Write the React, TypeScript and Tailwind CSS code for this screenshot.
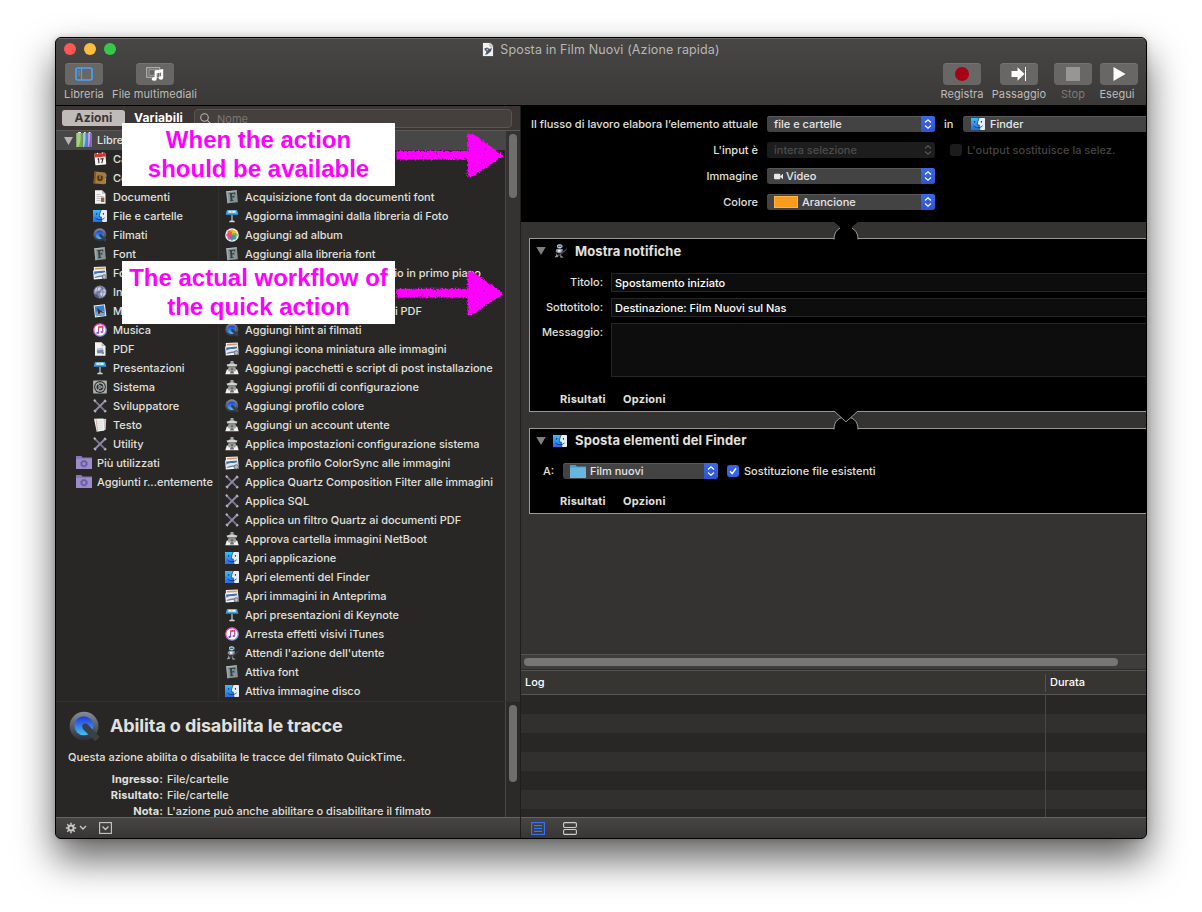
import React from "react";

type IconName =
  | "calendar" | "contacts" | "doc" | "finder" | "quicktime" | "font" | "preview"
  | "globe" | "mail" | "music" | "pdf" | "keynote" | "system" | "tools" | "text"
  | "folder" | "books" | "photos" | "installer" | "automator";

const drawings: Record<IconName, React.ReactNode> = {
  calendar: (
    <g transform="rotate(-5 7 7)">
      <rect x="1.800" y="1.200" width="11" height="11.800" rx="1" fill="#f7f7f7" />
      <path d="M1.800 2.200a1 1 0 011-1h9a1 1 0 011 1V5h-11z" fill="#d9332f" />
      <path d="M5 .5v1.600M9.800 .5v1.600" stroke="#eee" strokeWidth="1" />
      <path d="M4.600 7.100l1-.5v4.700M7.300 7H10l-1.600 4.300" stroke="#2d2d2d" strokeWidth="1.100" fill="none" />
    </g>
  ),
  contacts: (
    <g transform="rotate(5 7 7)">
      <path d="M11.800 2.500l1.400.2v3h-1.400z" fill="#5fa0d8" />
      <path d="M11.800 6.200l1.400.2v3h-1.400z" fill="#79b84c" />
      <path d="M11.800 9.600l1.400.2v2.400h-1.400z" fill="#d9a94a" />
      <rect x="1" y="1" width="11.300" height="12" rx="1" fill="#a87b3f" />
      <rect x="1" y="1" width="1.700" height="12" fill="#7c5726" />
      <circle cx="7" cy="7" r="3.300" fill="#8d632e" />
      <path d="M5.200 4.800v2.700a1.800 1.800 0 003.600 0V4.800" stroke="#4b3012" strokeWidth="1.400" fill="none" />
    </g>
  ),
  doc: (
    <g>
      <path d="M2 .3h7l3.500 3.500v9.900H2z" fill="#f3f3f3" />
      <path d="M9 .3l3.500 3.500H9z" fill="#bdbdbd" />
      <path d="M3.500 4.500h4M3.500 6.500h7M3.500 8.500h4M3.500 10.500h4" stroke="#b0b0b0" strokeWidth=".8" />
      <rect x="8" y="7.500" width="3.300" height="4.500" fill="#8a6242" />
    </g>
  ),
  finder: (
    <g>
      <rect x="0" y="1" width="14" height="12" rx=".8" fill="#e7edf6" />
      <path d="M0 1.800A.8.8 0 01.8 1h7.400C7 3.500 6.400 5.700 6.400 7.900h1.900c0 2 .2 3.600.7 5.100H.8a.8.8 0 01-.8-.8z" fill="url(#finderBlue)" />
      <path d="M8.200 1C7 3.500 6.400 5.700 6.400 7.900h1.900c0 2 .2 3.600.7 5.100" stroke="#15375f" strokeWidth=".7" fill="none" />
      <path d="M3.700 4v1.700M10.400 4v1.700" stroke="#14304f" strokeWidth="1" />
      <path d="M2.500 8.900c2.500 2.400 6.400 2.400 9 0" stroke="#14304f" strokeWidth=".9" fill="none" />
    </g>
  ),
  quicktime: (
    <g>
      <circle cx="6.800" cy="6.800" r="6.500" fill="url(#qtRing)" />
      <circle cx="6.700" cy="6.700" r="4.300" fill="url(#qtBlue)" />
      <path d="M6.900 5.700c.9-.1 1.400.2 2 .8l5 5.200-2 2-5.300-5.200c-.8-.8-.8-2.500.3-2.800z" fill="#3b4046" />
    </g>
  ),
  font: (
    <g transform="rotate(-5 7 7)">
      <rect x="1.800" y=".8" width="10.600" height="12" rx=".6" fill="#869498" />
      <rect x="1.800" y=".8" width="10.600" height="1" fill="#b4c0c2" />
      <rect x="1.800" y=".8" width="1.500" height="12" fill="#9eabad" />
      <path d="M4.300 2.900h6.200v2.200h-.7c-.1-.9-.5-1.200-1.300-1.200H7.300v2.500h.8c.4 0 .6-.2.700-.7h.6v2.300h-.6c-.1-.5-.3-.7-.7-.7h-.8v2.500c0 .5.200.6.900.7v.6H4.600v-.6c.5-.1.7-.2.700-.7V4.500c0-.6-.2-.8-1-.9z" fill="#343f43" />
    </g>
  ),
  preview: (
    <g>
      <g transform="rotate(-2 7 7)">
        <rect x="1" y=".8" width="12" height="8.500" fill="#f3f1ec" />
        <rect x="2" y="1.700" width="10" height="1.600" fill="#c39c68" />
      </g>
      <g transform="rotate(-5 7 7)">
        <rect x=".3" y="4" width="13" height="9" fill="#f7f7f7" />
        <rect x="1.300" y="5" width="11" height="3.500" fill="#3f6fba" />
        <path d="M1.300 8c4-2.400 8 .2 11-1.500v2.200c-4 2.200-8 .3-11 1.800z" fill="#dfe7f0" />
        <path d="M1.300 10.400c4-1.400 7.500-.5 11-1.200v1.200l-11 1.200z" fill="#6b7f9c" />
      </g>
      <circle cx="11.300" cy="10.900" r="2.200" fill="#b3bac4" stroke="#4e4e4e" strokeWidth=".7" />
    </g>
  ),
  globe: (
    <g>
      <circle cx="7" cy="7" r="6.500" fill="#8289ad" />
      <path d="M3 3l3-1 2 1-1 2-2 1-2 2-1.500-1zM8 6l3-2 2 2-1 4-3 2-2-3z" fill="#cbd0e2" />
      <path d="M1 9l3 .5L6 12l-1 1C3 12.500 1.500 11 1 9z" fill="#505980" />
      <ellipse cx="7" cy="7" rx="3" ry="6.400" fill="none" stroke="#4c5478" strokeWidth=".5" />
      <path d="M.6 7h12.800" stroke="#4c5478" strokeWidth=".5" />
    </g>
  ),
  mail: (
    <g transform="rotate(-7 7 7)">
      <rect x="1.300" y=".8" width="11.400" height="12" fill="#eceff3" />
      <rect x="2.300" y="1.800" width="9.400" height="10" fill="#3c7ecb" />
      <path d="M2.300 8.500l3-2 6.400 1v4.300H2.300z" fill="#6da2dd" />
      <path d="M4.500 3.500L7 6l4 3.500-3.500-.3L5 10z" fill="#2b3340" />
      <path d="M7 8l4 1.800-4 .9z" fill="#c79c58" />
    </g>
  ),
  music: (
    <g>
      <circle cx="7" cy="7" r="6.200" fill="#fff" stroke="url(#tunesRing)" strokeWidth="1.300" />
      <path d="M5.600 9.700V4.100l4.100-.9v5.600" stroke="url(#tunesNote)" strokeWidth="1.200" fill="none" />
      <path d="M5.600 3.900l4.100-.9v1.500l-4.100.9z" fill="#ef4a73" />
      <ellipse cx="4.700" cy="9.900" rx="1.400" ry="1.100" fill="#5b62e6" />
      <ellipse cx="8.800" cy="9" rx="1.400" ry="1.100" fill="#9b55dd" />
    </g>
  ),
  pdf: (
    <g>
      <path d="M2 .3h6.500l4 4v9.400H2z" fill="#f3f3f3" />
      <path d="M8.500.3l4 4h-4z" fill="#bdbdbd" />
      <path d="M3.800 6.400l6-.8.7 3.400-6.200.8z" fill="#b4c1d3" />
      <path d="M3.800 8.600l6.400-.9.5 3.300-6.400.6z" fill="#7186a6" />
      <circle cx="9.800" cy="11" r="1.300" fill="#8a8a8a" />
    </g>
  ),
  keynote: (
    <g>
      <path d="M2 .9h10l1.200 4.200H.8z" fill="#45a5e4" />
      <path d="M3.600 1.800h6.800l.5 2H3.100z" fill="#f8fafb" />
      <path d="M5.600 2.300h2.200v1.100H5.600z" fill="#d9c04a" />
      <path d="M.8 4.900h12.400v1H.8z" fill="#2583cb" />
      <path d="M6.400 5.900h1.200v6H6.400z" fill="#c0c9cf" />
      <path d="M4.300 12.500c0-.8 1.300-1 2.700-1s2.700.2 2.700 1v.7H4.300z" fill="#cdd5da" />
    </g>
  ),
  system: (
    <g>
      <rect x=".1" y=".4" width="13.800" height="13.200" rx=".8" fill="#a9aeb0" />
      <circle cx="7" cy="7" r="5.900" fill="#2a2c2e" />
      <circle cx="7" cy="7" r="4.200" fill="none" stroke="#b4b8bb" strokeWidth="1.200" />
      <circle cx="7" cy="7" r="1.700" fill="#b4b8bb" />
      <path d="M7 7L4.900 3.400M7 7h4.200M7 7l-2.100 3.600" stroke="#b4b8bb" strokeWidth=".8" />
      <circle cx="7" cy="7" r=".8" fill="#2a2c2e" />
    </g>
  ),
  tools: (
    <g>
      <path d="M2 2l10 10" stroke="#77728c" strokeWidth="1.800" />
      <path d="M12 2L2 12" stroke="#928da8" strokeWidth="1.800" />
      <path d="M1 .7l1.500 1.800M11.300 13l1.900-1.500" stroke="#b5b0c8" strokeWidth="2" />
      <path d="M11.300 1l1.800 1.900M1 11.200l1.900 1.900" stroke="#b5b0c8" strokeWidth="1.900" />
    </g>
  ),
  text: (
    <g>
      <path d="M5 1.500l8.200-.7-.5 11-5.700 1.200z" fill="#c9c9c9" />
      <path d="M1 .8l9.500-.3.900 12-7.700 1.200z" fill="#f4f4f2" />
      <path d="M3 3.300l6.500-.3M3.200 5.300l6.500-.3M3.400 7.300l6.500-.3M3.600 9.300l6.500-.3M3.800 11.200l6-.3" stroke="#c4c4c4" strokeWidth=".6" />
      <path d="M3 .8l1.600 12.600" stroke="#d59a96" strokeWidth=".7" />
    </g>
  ),
  folder: (
    <g>
      <path d="M0 1h5.300l1.400 1.600H16V14H0z" fill="#8577b8" />
      <path d="M0 3.800h16V14H0z" fill="#9a8dca" />
      <circle cx="8" cy="8.700" r="2.400" fill="none" stroke="#6b5ca5" strokeWidth="1.500" />
      <circle cx="8" cy="8.700" r="3.500" fill="none" stroke="#6b5ca5" strokeWidth="1" strokeDasharray="1.400 1.350" />
    </g>
  ),
  books: (
    <g>
      <path d="M.3 1h6v14h-6z" fill="#a5cf79" />
      <path d="M4.600 1h1.700v14H2.500C4.300 11 5 6.500 4.600 1z" fill="#6ead41" />
      <path d="M6.800 1H11v14H6.800z" fill="#9bc6ec" />
      <path d="M9.400 1H11v14H8c1.400-4 1.800-8 1.400-14z" fill="#4c87c7" />
      <path d="M11.500 1h4.300v14h-4.300z" fill="#c29be4" />
      <path d="M14.200 1h1.600v14h-3.300c1.400-4 2-8 1.700-14z" fill="#8a5fba" />
      <path d="M2 0h3v1H2zM8 0h1.800v1H8zM12.700 0h1.800v1h-1.800z" fill="#e8e8e8" />
    </g>
  ),
  photos: (
    <g>
      <circle cx="7" cy="7" r="6.800" fill="#f7f7f7" />
      {["#f7a21b", "#d8c826", "#6cb644", "#35a08f", "#4a83c9", "#8e62b4", "#dd4a7e", "#ef5634"].map((c, i) => (
        <ellipse key={c} cx="7" cy="4" rx="1.900" ry="2.800" fill={c} fillOpacity=".92" transform={`rotate(${i * 45} 7 7)`} />
      ))}
    </g>
  ),
  installer: (
    <g>
      <path d="M.3 13.300l1.500-4.800h10.400l1.500 4.800z" fill="#f2f2ef" />
      <path d="M2.800 9l1-4h6.400l1 4-1 1.500H3.800z" fill="#9da09c" />
      <path d="M1.600 3.600L7 2.400l5.400 1.200-.8 2H2.400z" fill="#d3d5d1" />
      <path d="M5.500 0h3v2l1.600 1H3.900l1.600-1z" fill="#a4a7a4" />
      <path d="M3 5.400h8v.9H3z" fill="#5d5f5d" />
      <path d="M5.800 7.300h2.400V9H5.800z" fill="#60635f" />
      <path d="M5.300 11L7 9.600 8.700 11l.3 1.500H5z" fill="#6b6d6a" />
    </g>
  ),
  automator: (
    <g>
      <path d="M4 1.300C5.500-.2 8 .1 9.300 1.300l.2 2-2.500 1-3-.9z" fill="#cfd6df" />
      <path d="M4.700 1.600h3.800v1.500H4.700z" fill="#28709a" />
      <path d="M3.500 5l3.500-.8 3 1.300-.7 3.400-4.300.3L2.500 7.500z" fill="#8f95a2" />
      <path d="M5 5.700l2.700.2-.5 1.900-2.200-.1z" fill="#f0f2f5" />
      <path d="M3 12.200l5-3.500L14 3.900l-.3 2-5.400 4.600-4 2.900z" fill="#3c3f57" />
      <path d="M3.700 9l1.300 3.600-2.800.9-.4-.8 1.200-.7zM7.500 9.700l1 2.500 2 .7-.3.700H7.300z" fill="#a8adb8" />
    </g>
  ),
};

function Icon({ name, size = 14, className = "" }: { name: IconName; size?: number; className?: string }) {
  const box = name === "folder" || name === "books" ? 16 : 14;
  return (
    <svg width={size} height={size} viewBox={`0 0 ${box} ${box}`} className={`shrink-0 ${className}`}>
      {drawings[name]}
    </svg>
  );
}

function SharedGradients() {
  return (
    <svg width="0" height="0" className="absolute">
      <defs>
        <linearGradient id="finderBlue" x1="0" y1="0" x2="0" y2="1">
          <stop offset="0" stopColor="#35c0fb" />
          <stop offset="1" stopColor="#2a67ee" />
        </linearGradient>
        <linearGradient id="qtRing" x1="0" y1="0" x2="0" y2="1">
          <stop offset="0" stopColor="#848d9c" />
          <stop offset="1" stopColor="#2c2f34" />
        </linearGradient>
        <linearGradient id="qtBlue" x1="0" y1="0" x2="0" y2="1">
          <stop offset="0" stopColor="#2437d8" />
          <stop offset="1" stopColor="#42c2fb" />
        </linearGradient>
        <linearGradient id="tunesRing" x1="0" y1="0" x2="1" y2="1">
          <stop offset="0" stopColor="#fb5163" />
          <stop offset=".5" stopColor="#c25ce6" />
          <stop offset="1" stopColor="#4fb4f5" />
        </linearGradient>
        <linearGradient id="tunesNote" x1="0" y1="0" x2="0" y2="1">
          <stop offset="0" stopColor="#f0436e" />
          <stop offset="1" stopColor="#5b62e6" />
        </linearGradient>
      </defs>
    </svg>
  );
}

const categories: [IconName, string][] = [
  ["calendar", "Ca"],
  ["contacts", "Co"],
  ["doc", "Documenti"],
  ["finder", "File e cartelle"],
  ["quicktime", "Filmati"],
  ["font", "Font"],
  ["preview", "Fo"],
  ["globe", "In"],
  ["mail", "M"],
  ["music", "Musica"],
  ["pdf", "PDF"],
  ["keynote", "Presentazioni"],
  ["system", "Sistema"],
  ["tools", "Sviluppatore"],
  ["text", "Testo"],
  ["tools", "Utility"],
];

const actionsTop: [IconName, string][] = [
  ["font", "Acquisizione font da documenti font"],
  ["keynote", "Aggiorna immagini dalla libreria di Foto"],
  ["photos", "Aggiungi ad album"],
  ["font", "Aggiungi alla libreria font"],
];

const actionsBottom: [IconName, string][] = [
  ["quicktime", "Aggiungi hint ai filmati"],
  ["preview", "Aggiungi icona miniatura alle immagini"],
  ["installer", "Aggiungi pacchetti e script di post installazione"],
  ["installer", "Aggiungi profili di configurazione"],
  ["quicktime", "Aggiungi profilo colore"],
  ["installer", "Aggiungi un account utente"],
  ["installer", "Applica impostazioni configurazione sistema"],
  ["preview", "Applica profilo ColorSync alle immagini"],
  ["tools", "Applica Quartz Composition Filter alle immagini"],
  ["tools", "Applica SQL"],
  ["tools", "Applica un filtro Quartz ai documenti PDF"],
  ["installer", "Approva cartella immagini NetBoot"],
  ["finder", "Apri applicazione"],
  ["finder", "Apri elementi del Finder"],
  ["preview", "Apri immagini in Anteprima"],
  ["keynote", "Apri presentazioni di Keynote"],
  ["music", "Arresta effetti visivi iTunes"],
  ["automator", "Attendi l'azione dell'utente"],
  ["font", "Attiva font"],
  ["finder", "Attiva immagine disco"],
];

function ActionRow({ icon, label }: { icon: IconName; label: string }) {
  return (
    <div className="flex h-[19px] items-center gap-[6px] pl-[6px]">
      <Icon name={icon} className="mb-px" />
      <span>{label}</span>
    </div>
  );
}

function ToolButton({ label, width, children, dim = false, nudge = "" }: { label: string; width: string; children: React.ReactNode; dim?: boolean; nudge?: string }) {
  return (
    <div className={`flex flex-col items-center ${width}`}>
      <div className="flex h-[22px] w-[38px] items-center justify-center rounded-[4px] bg-[#686766] shadow-[inset_0_1px_0_#757473]">{children}</div>
      <span className={`mt-[1px] whitespace-nowrap text-[11px] leading-4 tracking-[0.08px] ${nudge} ${dim ? "text-[#7c7b7a]" : "text-[#bdbcbb]"}`}>{label}</span>
    </div>
  );
}

function TopBar() {
  return (
    <header className="flex h-[68px] shrink-0 flex-col border-b border-black bg-gradient-to-b from-[#484745] to-[#3b3937] shadow-[inset_0_1px_0_#6b6a69]">
      <div className="grid h-[25px] grid-cols-[1fr_auto_1fr] items-center">
        <div className="flex gap-2 pb-[3px] pl-2">
          <i className="size-3 rounded-full bg-[#fc5753]" />
          <i className="size-3 rounded-full bg-[#fdbc40]" />
          <i className="size-3 rounded-full bg-[#36c84b]" />
        </div>
        <div className="flex items-center gap-[6px] pb-[2px] text-[12.500px] tracking-[0.14px] text-[#b8b7b6]">
          <svg width="12" height="15" viewBox="0 0 12 15">
            <path d="M.5.5h7.500l3.500 3.500v10.500H.5z" fill="#f1f1f1" stroke="#222" strokeWidth=".6" />
            <path d="M8 .5L11.500 4H8z" fill="#fff" stroke="#555" strokeWidth=".5" />
            <path d="M2 6.800l3-1.300L8 7l2-1.700-1 4-3.500 3L3 12.800 4.500 10z" fill="#4f5869" />
            <path d="M4 7l2.500-.3L5.500 9z" fill="#b7c2d6" />
          </svg>
          <span className="pt-[2px]">Sposta in Film Nuovi (Azione rapida)</span>
        </div>
        <span />
      </div>
      <div className="flex pl-2 pr-2">
        <ToolButton label="Libreria" width="w-10">
          <svg width="18" height="14" viewBox="0 0 18 14" fill="none" stroke="#4aa3fb">
            <rect x="1" y="1" width="16" height="12" rx="2" strokeWidth="1.600" />
            <path d="M6.500 1v12" strokeWidth="1.200" />
            <path d="M2.800 4.200h2M2.800 6.200h2M2.800 8.200h2" strokeWidth=".9" />
          </svg>
        </ToolButton>
        <div className="w-2" />
        <ToolButton label="File multimediali" width="w-[86px]" nudge="-ml-px">
          <svg width="18" height="14" viewBox="0 0 18 14" fill="none">
            <rect x=".7" y=".7" width="13" height="9.600" stroke="#bcbbba" />
            <rect x="3" y="2.700" width="8.500" height="5.600" stroke="#a3a2a1" strokeWidth=".9" />
            <path d="M8.600 3.500L17.200 2v8.900a2.300 1.700 0 11-2.100-1.600V5.400l-4.400.8v5.700a2.500 1.800 0 11-2.100-1.700z" fill="#fff" />
          </svg>
        </ToolButton>
        <div className="flex-1" />
        <ToolButton label="Registra" width="w-[42px]">
          <i className="size-[14px] rounded-full bg-[#a80014]" />
        </ToolButton>
        <div className="w-[9px]" />
        <ToolButton label="Passaggio" width="w-[54px]">
          <svg width="16" height="14" viewBox="0 0 16 14">
            <path d="M.5 4h6V.3L13.500 7l-7 6.700V10h-6z" fill="#fff" />
            <path d="M14.500 0v14" stroke="#fff" strokeWidth="1" />
          </svg>
        </ToolButton>
        <div className="w-2" />
        <ToolButton label="Stop" width="w-[38px]" dim>
          <i className="size-[14px] bg-[#979695]" />
        </ToolButton>
        <div className="w-2" />
        <ToolButton label="Esegui" width="w-[38px]" nudge="-ml-[4px]">
          <svg width="13" height="14" viewBox="0 0 13 14"><path d="M.5 0L12.500 7 .5 14z" fill="#fff" /></svg>
        </ToolButton>
      </div>
    </header>
  );
}

function Library() {
  return (
    <div className="flex h-[571px] shrink-0 border-b border-[#323130]">
      <div className="flex min-w-0 flex-1">
        <div className="w-[163px] shrink-0 border-r border-[#303030]">
          <div className="-mr-px flex h-[19px] items-center bg-[#474747] pl-2">
            <svg width="9" height="8" viewBox="0 0 9 8"><path d="M0 0h9L4.500 8z" fill="#b5b5b5" /></svg>
            <Icon name="books" size={16} className="mb-px ml-[3px]" />
            <span className="ml-[5px]">Libre</span>
          </div>
          {categories.map(([icon, label]) => (
            <div key={label} className="flex h-[19px] items-center gap-[6px] pl-[37px]">
              <Icon name={icon} className="mb-px" />
              <span>{label}</span>
            </div>
          ))}
          {["Più utilizzati", "Aggiunti r...entemente"].map((label) => (
            <div key={label} className="flex h-[19px] items-center gap-[5px] whitespace-nowrap pl-5 tracking-[-0.03px]">
              <Icon name="folder" size={16} className="mb-px" />
              <span>{label}</span>
            </div>
          ))}
        </div>
        <div className="flex-1 whitespace-nowrap tracking-[-0.015px]">
          <div className="h-[19px] bg-[#474747]" />
          <div className="h-[38px]" />
          {actionsTop.map(([icon, label]) => <ActionRow key={label} icon={icon} label={label} />)}
          <div className="flex h-[19px] items-center justify-end pr-6">io in primo piano</div>
          <div className="h-[19px]" />
          <div className="flex h-[19px] items-center justify-end pr-[83px]">i PDF</div>
          {actionsBottom.map(([icon, label]) => <ActionRow key={label} icon={icon} label={label} />)}
        </div>
      </div>
      <div className="w-[15px] border-l border-[#474747] bg-[#343332] pl-[3px] pt-[3px]">
        <div className="h-16 w-2 rounded-full bg-[#6f6e6d]" />
      </div>
    </div>
  );
}

function Sidebar() {
  return (
    <aside className="flex w-[465px] shrink-0 flex-col border-r border-[#1f1e1d] text-[11px] font-medium text-[#e0e0df]">
      <div className="flex h-[25px] shrink-0 items-start border-b border-[#5c5856] bg-[#3b3634] pl-[6px] pt-[3px] font-bold">
        <div className="mt-px flex h-4 w-[63px] items-center justify-center rounded-[3px] bg-[#c0bbb8] text-[12px] tracking-[0.1px] text-[#3a3532]">Azioni</div>
        <div className="mt-px flex h-4 w-[67px] items-center justify-center text-[12px] tracking-[0.12px] text-white">Variabili</div>
        <div className="ml-[2px] flex h-[19px] w-[318px] items-center rounded-[4px] border border-[#5a5553] bg-[#45403e] pl-[5px] font-normal text-[#7b7673]">
          <svg width="11" height="11" viewBox="0 0 11 11" fill="none" stroke="#b9b5b2" strokeWidth="1.100">
            <circle cx="4.500" cy="4.500" r="3.800" /><path d="M7.300 7.300l3.300 3.300" />
          </svg>
          <span className="ml-[6px] pt-px">Nome</span>
        </div>
      </div>
      <Library />
      <div className="flex h-[115px] shrink-0 overflow-hidden">
        <div className="flex-1 overflow-hidden">
          <div className="flex items-start gap-[10px] pl-[13px] pt-[9px]">
            <Icon name="quicktime" size={31} />
            <h1 className="text-[18px] font-bold leading-[30px] tracking-[-0.12px]">Abilita o disabilita le tracce</h1>
          </div>
          <p className="mt-[7px] pl-3 leading-4">Questa azione abilita o disabilita le tracce del filmato QuickTime.</p>
          <dl className="mt-[6px] grid grid-cols-[107px_1fr] gap-x-1 whitespace-nowrap leading-4">
            <dt className="text-right font-bold tracking-[0.1px]">Ingresso:</dt><dd>File/cartelle</dd>
            <dt className="text-right font-bold tracking-[0.1px]">Risultato:</dt><dd>File/cartelle</dd>
            <dt className="text-right font-bold tracking-[0.1px]">Nota:</dt><dd>L'azione può anche abilitare o disabilitare il filmato</dd>
          </dl>
        </div>
        <div className="w-[15px] border-l border-[#474747] bg-[#2b2a29] pl-[3px] pt-[3px]">
          <div className="h-[77px] w-2 rounded-full bg-[#6f6e6d]" />
        </div>
      </div>
      <div className="flex flex-1 items-center border-t border-[#656463] bg-gradient-to-b from-[#474543] to-[#393735] pl-[9px]">
        <svg width="12" height="12" viewBox="0 0 12 12" fill="none" stroke="#c9c8c7">
          <circle cx="6" cy="6" r="2.600" strokeWidth="2" />
          <path d="M6 .8v2M6 9.200v2M.8 6h2M9.200 6h2M2.300 2.300l1.400 1.400M8.300 8.300l1.400 1.400M9.700 2.300L8.300 3.700M3.700 8.300L2.300 9.700" strokeWidth="1.500" />
        </svg>
        <svg width="8" height="6" viewBox="0 0 8 6" className="ml-[2px]" fill="none" stroke="#c9c8c7" strokeWidth="1.400"><path d="M1 1l3 3 3-3" /></svg>
        <svg width="13" height="12" viewBox="0 0 13 12" className="ml-3" fill="none" stroke="#c9c8c7"><rect x=".6" y=".6" width="11.800" height="10.800" strokeWidth="1.100" /><path d="M3.500 4.500l3 3 3-3" strokeWidth="1.300" /></svg>
      </div>
    </aside>
  );
}

function Chevrons({ color }: { color: string }) {
  return (
    <svg width="8" height="12" viewBox="0 0 8 12" fill="none" stroke={color} strokeWidth="1.200">
      <path d="M1 4.500L4 1.700l3 2.800M1 7.500l3 2.800 3-2.800" />
    </svg>
  );
}

function Select({ children, width = "w-[168px]", disabled = false }: { children: React.ReactNode; width?: string; disabled?: boolean }) {
  return (
    <div className={`flex h-4 shrink-0 items-center overflow-hidden rounded-[3px] ${width} ${disabled ? "bg-[#1d1d1d] text-[#4c4c4c]" : "bg-[#434343] text-[#e6e6e6] shadow-[inset_0_1px_0_#595959]"}`}>
      <div className="flex flex-1 items-center pl-[7px]">{children}</div>
      <div className={`flex h-4 w-[14px] items-center justify-center ${disabled ? "" : "bg-gradient-to-b from-[#3b69ea] to-[#2e55cd]"}`}>
        <Chevrons color={disabled ? "#555" : "#fff"} />
      </div>
    </div>
  );
}

function FormRow({ label, children }: { label: string; children: React.ReactNode }) {
  return (
    <div className="flex h-[26px] items-center">
      <span className="mr-[9px] w-[237px] shrink-0 whitespace-nowrap text-right tracking-[0.02px]">{label}</span>
      {children}
    </div>
  );
}

function Joint({ open = false }: { open?: boolean }) {
  return (
    <svg width="26" height="19" viewBox="0 0 26 19" className="absolute -top-[18px] left-[303px]">
      <path d="M1 18v1h24v-1z" fill="#000" />
      <path d="M1 18.500C1 10 6 6 13 6s12 4 12 12.500" fill="#000" stroke="#9a9a9a" />
      <path d={open ? "M0 0h26L13 11z" : "M1 0L13 10.800 25 0"} fill="#000" stroke={open ? "none" : "#9a9a9a"} />
      {open && <path d="M7 6h12v3H7z" fill="#000" />}
    </svg>
  );
}

function CardTitle({ icon, title, offset = "" }: { icon: IconName; title: string; offset?: string }) {
  return (
    <div className={`flex h-6 items-center pl-[6px] ${offset}`}>
      <svg width="10" height="8" viewBox="0 0 10 8" className="mb-px"><path d="M.3 0h9.400L5 8z" fill="#7e7e7e" /></svg>
      <Icon name={icon} className="mb-px ml-[7px]" />
      <h2 className="ml-2 text-[13px] font-bold tracking-[0.12px]">{title}</h2>
    </div>
  );
}

function CardLinks() {
  return (
    <div className="flex gap-4 pl-[30px] font-bold leading-4 tracking-[0.22px]">
      <span className="w-[47px]">Risultati</span>
      <span>Opzioni</span>
    </div>
  );
}

function Field({ label, value = "", height }: { label: string; value?: string; height: string }) {
  return (
    <div className="flex">
      <span className="mr-2 mt-[1px] w-[73px] shrink-0 text-right leading-4">{label}</span>
      <div className={`flex flex-1 items-start border border-r-0 border-[#262626] bg-[#0d0d0d] pl-[3px] leading-[18px] text-white ${height}`}>{value}</div>
    </div>
  );
}

function Workflow() {
  return (
    <main className="flex min-w-0 flex-1 flex-col overflow-hidden text-[11px] font-medium text-[#e0e0df]">
      <section className="h-[116px] shrink-0 overflow-hidden bg-black pt-[5px]">
        <FormRow label="Il flusso di lavoro elabora l’elemento attuale">
          <Select>file e cartelle</Select>
          <span className="ml-[9px] w-[19px] shrink-0">in</span>
          <Select width="w-[240px]"><Icon name="finder" className="ml-px mr-[5px]" />Finder</Select>
        </FormRow>
        <FormRow label="L'input è">
          <Select disabled>intera selezione</Select>
          <i className="ml-[15px] size-3 rounded-[3px] bg-[#1c1c1c]" />
          <span className="ml-[5px] text-[#444]">L'output sostituisce la selez.</span>
        </FormRow>
        <FormRow label="Immagine">
          <Select>
            <svg width="9" height="7" viewBox="0 0 9 7" className="mr-[3px]" fill="#e6e6e6"><rect x="0" y=".7" width="6.300" height="5.600" rx="1" /><path d="M5.800 3.500L9 .8v5.400z" /></svg>
            Video
          </Select>
        </FormRow>
        <FormRow label="Colore">
          <Select>
            <i className="mr-1 h-3 w-6 border border-[#ffb445] bg-[#fa9b1e]" />
            Arancione
          </Select>
        </FormRow>
      </section>
      <section className="h-[432px] shrink-0 overflow-hidden bg-[#343331] pl-2 pt-4">
        <article className="relative h-[174px] border border-r-0 border-[#989898] bg-black">
          <Joint open />
          <CardTitle icon="automator" title="Mostra notifiche" offset="pt-px" />
          <div className="mt-[10px] flex flex-col gap-[6px]">
            <Field label="Titolo:" value="Spostamento iniziato" height="h-[19px]" />
            <Field label="Sottotitolo:" value="Destinazione: Film Nuovi sul Nas" height="h-[19px]" />
            <Field label="Messaggio:" height="h-[54px]" />
          </div>
          <div className="mt-[14px]"><CardLinks /></div>
        </article>
        <article className="relative mt-4 h-[86px] border border-r-0 border-[#989898] bg-black">
          <Joint />
          <CardTitle icon="finder" title="Sposta elementi del Finder" />
          <div className="mt-[10px] flex h-4 items-center pl-[13px]">
            <span className="w-5">A:</span>
            <Select width="w-[155px]">
              <svg width="16" height="14" viewBox="0 0 16 14" className="mr-1"><path d="M0 1h5.500L7 2.500h9V14H0z" fill="#4b9cc9" /><path d="M0 3.500h16V14H0z" fill="#66b6dd" /></svg>
              Film nuovi
            </Select>
            <i className="ml-[9px] flex size-3 items-center justify-center rounded-[3px] bg-[#3564e4]">
              <svg width="8" height="8" viewBox="0 0 8 8" fill="none" stroke="#fff" strokeWidth="1.500"><path d="M1 4.300L3.200 6.600 7 1.200" /></svg>
            </i>
            <span className="ml-[5px]">Sostituzione file esistenti</span>
          </div>
          <div className="mt-[14px]"><CardLinks /></div>
        </article>
      </section>
      <div className="h-4 shrink-0 border-b border-t border-b-[#2b2a29] border-t-[#545352] bg-[#3e3d3b] pl-[3px] pt-[3px]">
        <div className="h-2 w-[594px] rounded-full bg-[#777674]" />
      </div>
      <div className="flex h-[25px] shrink-0 items-center border-b border-t border-[#565553] bg-[#373531] text-[#fff]">
        <span className="w-[524px] pl-1">Log</span>
        <span className="flex h-[18px] items-center border-l border-[#54534f] pl-1">Durata</span>
      </div>
      <div className="flex h-[122px] shrink-0 flex-col overflow-hidden">
        {[0, 1, 2, 3, 4, 5, 6].map((n) => (
          <div key={n} className={`flex h-[19px] shrink-0 ${n % 2 ? "bg-[#31302e]" : "bg-[#282725]"}`}>
            <div className="w-[525px] border-r border-[#494846]" />
          </div>
        ))}
      </div>
      <div className="flex flex-1 items-center gap-[18px] border-t border-[#656463] bg-gradient-to-b from-[#474543] to-[#393735] pl-[10px] pt-px">
        <svg width="14" height="13" viewBox="0 0 14 13" fill="none" stroke="#3775ff" strokeWidth="1.100"><rect x=".6" y=".6" width="12.800" height="11.800" /><path d="M3 3.600h8M3 6.500h8M3 9.400h8" /></svg>
        <svg width="14" height="13" viewBox="0 0 14 13" fill="none" stroke="#cfcecd" strokeWidth="1.100"><rect x=".6" y=".6" width="12.800" height="4.900" rx="1.200" /><rect x=".6" y="7.500" width="12.800" height="4.900" rx="1.200" /></svg>
      </div>
    </main>
  );
}

function Annotation({ lines, place, seed }: { lines: string[]; place: string; seed: number }) {
  return (
    <div className={`absolute left-[122px] flex items-center ${place}`}>
      <div className="flex h-[63px] w-[273px] flex-col items-center justify-center whitespace-nowrap bg-white pb-[2px] font-['Liberation_Sans',Arial,sans-serif] text-[24px] font-bold leading-[29px] text-[#ff00ff]">
        {lines.map((line) => <span key={line}>{line}</span>)}
      </div>
      <svg width="110" height="48" viewBox="0 0 110 48" className="shrink-0">
        <defs>
          <filter id={`rough${seed}`} x="-5%" y="-5%" width="110%" height="110%">
            <feTurbulence type="fractalNoise" baseFrequency=".6" numOctaves="2" seed={seed} result="n" />
            <feDisplacementMap in="SourceGraphic" in2="n" scale="4.500" xChannelSelector="R" yChannelSelector="G" />
          </filter>
        </defs>
        <path d="M1.500 19.800h71V2.800l5-.3L107 23.500v2.500L77.500 45.200l-5 .5V28.500h-71z" fill="#f0f" filter={`url(#rough${seed})`} />
        <path d="M76 14h1M80 19h1.200M78 33h1M84 29h1M88 22h1.300M92 26h1M76 38h1M90 18h.8M12 23h1M27 26h1M41 22h1M58 26h1" stroke="#5c0f5a" strokeWidth="1" />
      </svg>
    </div>
  );
}

export default function App() {
  return (
    <div className="relative h-[912px] w-[1202px] overflow-hidden bg-white pl-[55px] pt-[37px] font-['Inter','Liberation_Sans',sans-serif]">
      <SharedGradients />
      <div className="flex h-[802px] w-[1092px] flex-col overflow-hidden rounded-[6px] border border-black bg-[#282725] shadow-[0_20px_38px_rgba(0,0,0,0.62),0_0_6px_rgba(0,0,0,0.18)]">
        <TopBar />
        <div className="flex min-h-0 flex-1">
          <Sidebar />
          <Workflow />
        </div>
      </div>
      <Annotation lines={["When the action", "should be available"]} place="top-[123px]" seed={3} />
      <Annotation lines={["The actual workflow of", "the quick action"]} place="top-[261px]" seed={8} />
    </div>
  );
}
